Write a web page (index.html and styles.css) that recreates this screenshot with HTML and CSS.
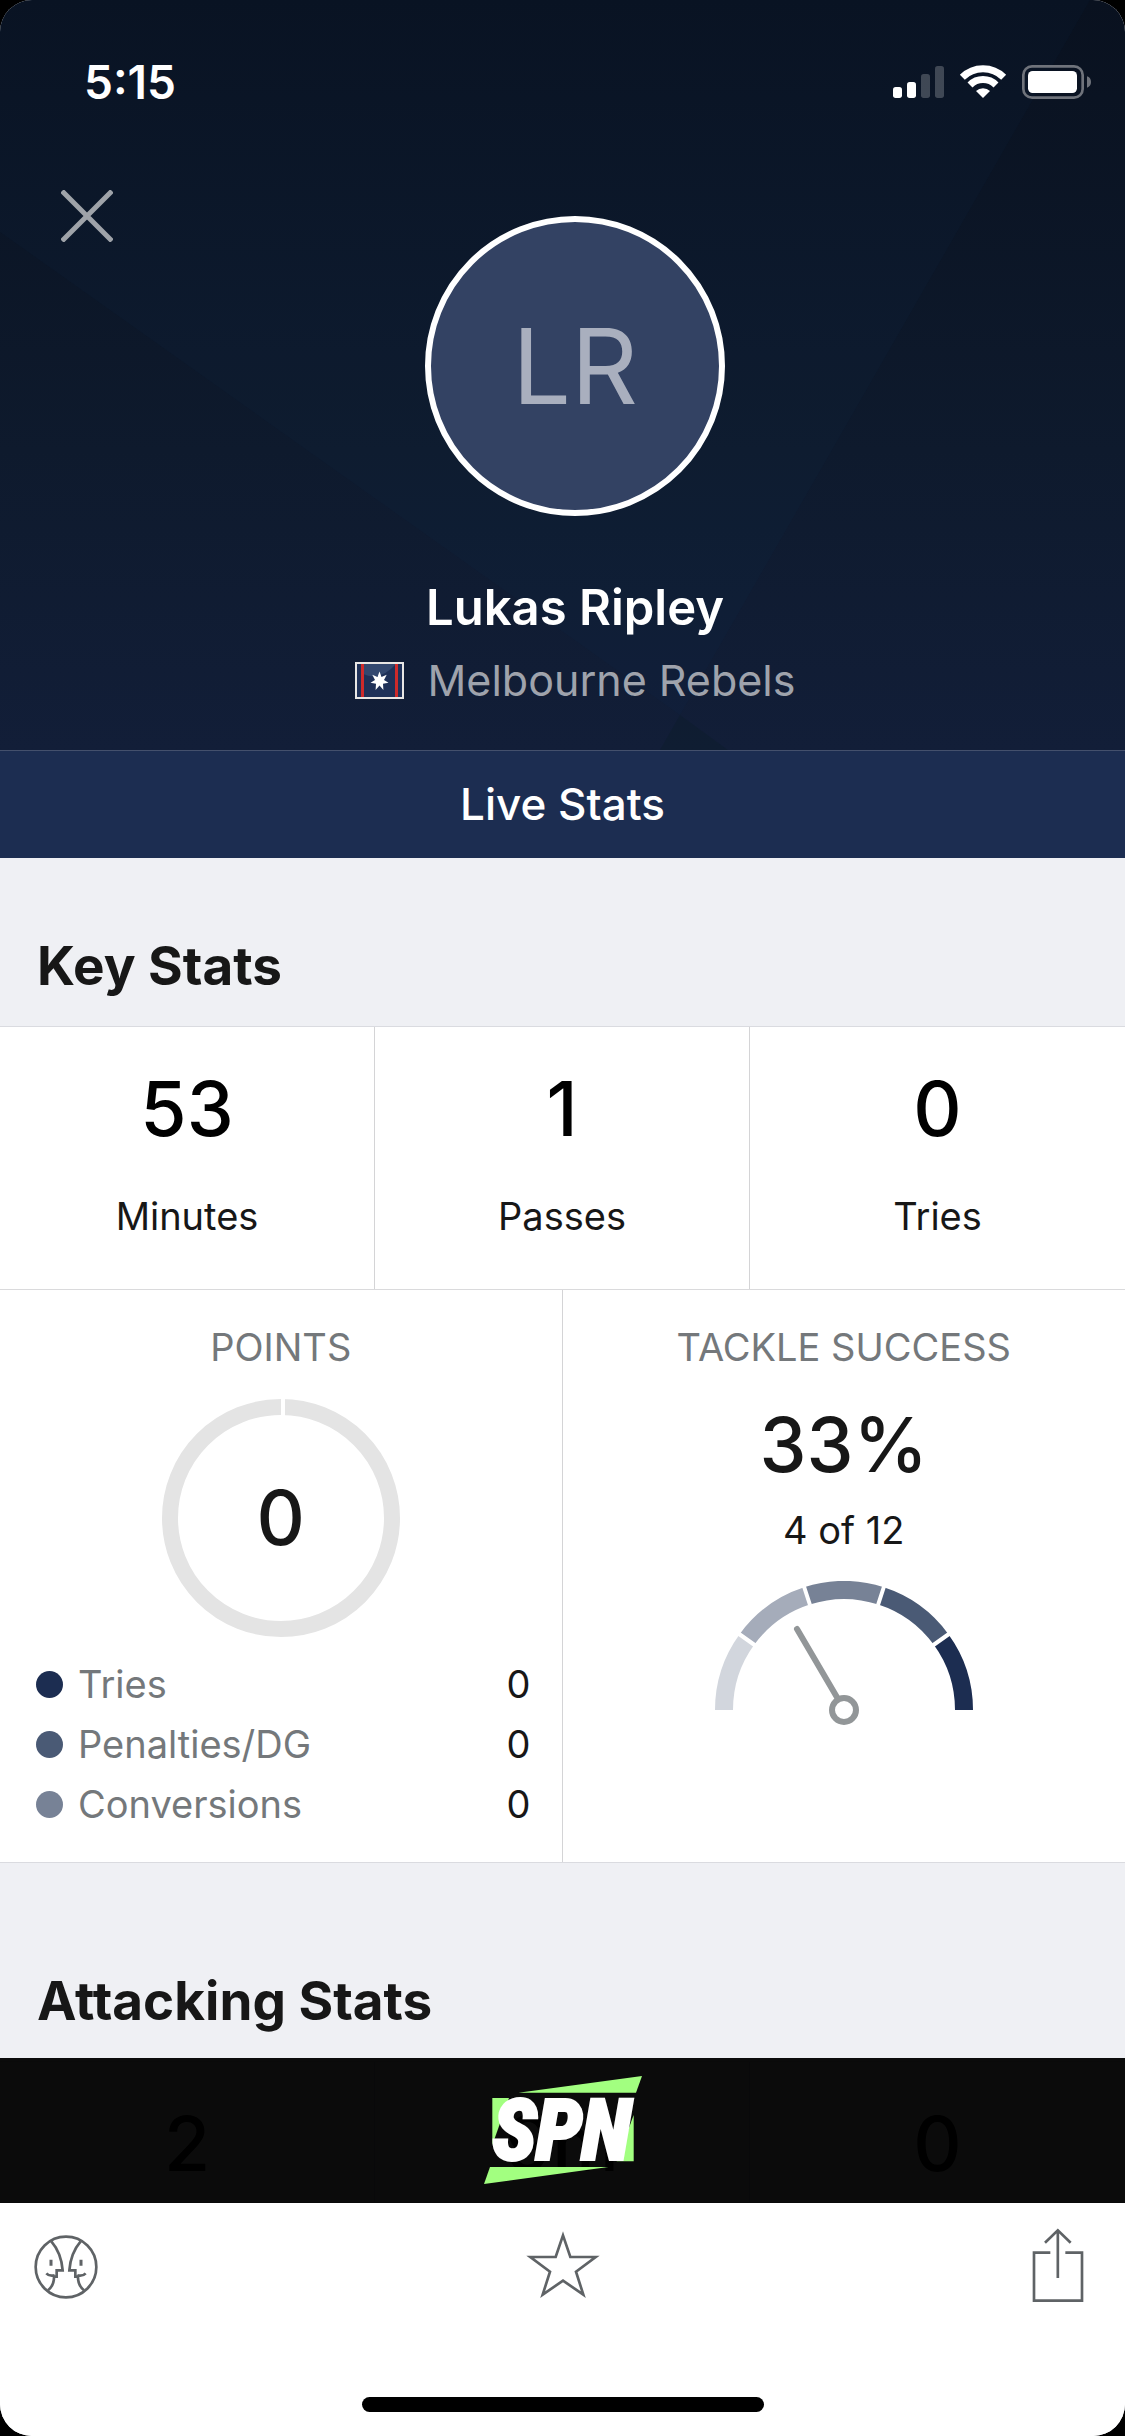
FILE: index.html
```
<!DOCTYPE html>
<html lang="en">
<head>
    <meta charset="UTF-8">
    <meta name="viewport" content="width=device-width, initial-scale=1.0">
    <title>Lukas Ripley - Live Stats</title>
    <link rel="stylesheet" href="styles.css">
</head>
<body>
    <div class="screen">

        <header class="header">
            <svg class="header-shapes" viewBox="0 0 1125 750" preserveAspectRatio="none" aria-hidden="true">
                <polygon points="0,0 1090,0 680,715 0,232" fill="#14326a" opacity="0.07"/>
                <polygon points="680,715 728,750 660,750" fill="#0c1c28" opacity="0.35"/>
            </svg>

            <div class="status-bar">
                <span class="time">5:15</span>
                <svg class="status-icons" viewBox="99 72 594 108" aria-label="Signal, Wi-Fi and battery">
                    <g fill="#fff">
                        <rect x="99" y="141" width="27" height="33" rx="8"/>
                        <rect x="141" y="126" width="27" height="48" rx="8"/>
                        <rect x="183" y="102" width="27" height="72" rx="8" opacity="0.22"/>
                        <rect x="225" y="78" width="27" height="96" rx="8" opacity="0.22"/>
                        <path d="M369 174L348 153A30 30 0 0 1 390 153Z"/>
                    </g>
                    <g fill="none" stroke="#fff" stroke-width="21">
                        <path d="M330 135A55 55 0 0 1 408 135"/>
                        <path d="M307 112A88 88 0 0 1 431 112"/>
                    </g>
                    <rect x="490" y="79" width="178" height="94" rx="26" fill="none" stroke="#6f737b" stroke-width="8"/>
                    <rect x="504" y="93" width="147" height="66" rx="14" fill="#fff"/>
                    <path d="M681 109q12 4 12 17t-12 17z" fill="#6f737b"/>
                </svg>
            </div>

            <div class="profile">
                <button class="close" aria-label="Close">
                    <svg viewBox="0 0 52 52"><path d="M1 1L51 51M51 1L1 51"/></svg>
                </button>
                <div class="avatar">LR</div>
            </div>
            <div class="player">
                <h1 class="player-name">Lukas Ripley</h1>
                <p class="team">
                    <svg class="flag" viewBox="0 0 49 37" aria-hidden="true">
                        <rect width="49" height="37" fill="#e8e6e4"/>
                        <rect x="2" y="2" width="45" height="33" fill="#1f3158"/>
                        <path d="M8 2h33q-16 18-33 10z" fill="#33486f"/>
                        <path d="M6 2h3v33h-3zM40 2h3v33h-3z" fill="#cf2a2a"/>
                        <path d="M24.500 9.500l2 5.500 5.200-2.200-2.700 5.200 4.500 2.700-5.500 1 .4 6.300-3.900-4.500-3.900 4.500.4-6.300-5.500-1 4.500-2.700-2.700-5.200 5.200 2.200z" fill="#fff"/>
                    </svg>
                    Melbourne Rebels
                </p>
            </div>
        </header>

        <nav class="tabs">
            <a href="#live" class="tab">Live Stats</a>
        </nav>

        <main class="content" id="live">
            <section>
                <h2 class="section-title">Key Stats</h2>
                <div class="stat-grid">
                    <div class="stat">
                        <p class="big-number">53</p>
                        <p class="stat-label">Minutes</p>
                    </div>
                    <div class="stat">
                        <p class="big-number">1</p>
                        <p class="stat-label">Passes</p>
                    </div>
                    <div class="stat">
                        <p class="big-number">0</p>
                        <p class="stat-label">Tries</p>
                    </div>
                </div>

                <div class="card-row">
                    <div class="card">
                        <h3 class="card-title">Points</h3>
                        <div class="donut">
                            <svg viewBox="0 0 238 238" aria-hidden="true">
                                <circle cx="119" cy="119" r="111" fill="none" stroke="#e4e4e4" stroke-width="16"/>
                                <path d="M121 0V18" stroke="#fff" stroke-width="4"/>
                            </svg>
                            <span class="big-number">0</span>
                        </div>
                        <ul class="legend">
                            <li><span class="dot dot-tries"></span>Tries<b>0</b></li>
                            <li><span class="dot dot-penalties"></span>Penalties/DG<b>0</b></li>
                            <li><span class="dot dot-conversions"></span>Conversions<b>0</b></li>
                        </ul>
                    </div>

                    <div class="card">
                        <h3 class="card-title">Tackle Success</h3>
                        <p class="big-number percent">33%</p>
                        <p class="tackles">4 of 12</p>
                        <svg class="gauge" viewBox="0 0 258 145" aria-hidden="true">
                            <!-- five bands of 36 degrees each -->
                            <g fill="none" stroke-width="18">
                                <path d="M9 129A120 120 0 0 1 31.900 58.500" stroke="#d2d6dd"/>
                                <path d="M31.900 58.500A120 120 0 0 1 91.900 14.900" stroke="#a5acba"/>
                                <path d="M91.900 14.900A120 120 0 0 1 166.100 14.900" stroke="#778296"/>
                                <path d="M166.100 14.900A120 120 0 0 1 226.100 58.500" stroke="#4a5a75"/>
                                <path d="M226.100 58.500A120 120 0 0 1 249 129" stroke="#1c2d51"/>
                            </g>
                            <g stroke="#fff" stroke-width="4">
                                <path d="M22 51.500L41 65M88.500 4L95 24M169.500 4L163 24M236 51.500L217 65"/>
                            </g>
                            <g fill="none" stroke="#929698" stroke-width="6">
                                <path d="M82 48L123 118" stroke-linecap="round"/>
                                <circle cx="129" cy="129" r="12"/>
                            </g>
                        </svg>
                    </div>
                </div>
            </section>

            <section class="attacking">
                <h2 class="section-title">Attacking Stats</h2>
                <div class="stat-grid">
                    <div class="stat">
                        <p class="big-number">2</p>
                    </div>
                    <div class="stat">
                        <p class="big-number">9m</p>
                    </div>
                    <div class="stat">
                        <p class="big-number">0</p>
                    </div>
                </div>
            </section>
        </main>

        <footer class="footer">
            <a href="#sponsor" class="banner" aria-label="Sponsor">
                <svg class="banner-logo" viewBox="72 48 474 324">
                    <g fill="#a2ff80">
                        <polygon points="175,98 546,48 528,98"/>
                        <polygon points="97,114 147,114 97,255"/>
                        <polygon points="521,165 521,304 470,304"/>
                        <polygon points="90,321 445,321 72,372"/>
                    </g>
                    <text class="logo-text" x="98" y="298">SPN</text>
                </svg>
            </a>

            <div class="toolbar">
                <button aria-label="Player comparison">
                    <svg viewBox="41 28 192 228">
                        <circle cx="137" cy="142" r="91"/>
                        <path d="M93 65Q123 100 127 152H109V171H101Q102 196 83 212"/>
                        <path d="M181 65Q151 100 147 152H165V171H173Q172 196 191 212"/>
                        <path d="M78 161Q87 171 103 167M196 161Q187 171 171 167"/>
                        <path d="M92 120V138M182 120V138" stroke-width="9"/>
                    </svg>
                </button>
                <button aria-label="Add to favourites">
                    <svg viewBox="62 28 192 228">
                        <path d="M158 47L180 112H256L197 156L219 225L158 183L97 225L119 156L60 112H136Z"/>
                    </svg>
                </button>
                <button aria-label="Share">
                    <svg viewBox="50 54 192 228">
                        <path d="M120 125H71V269H215V125H165M142.500 60V201M104 95L142.500 58L181 95"/>
                    </svg>
                </button>
            </div>
            <div class="home-indicator"></div>
        </footer>

    </div>
</body>
</html>
```

FILE: styles.css
```
* {
    margin: 0;
    padding: 0;
    box-sizing: border-box;
}

body {
    background: #000;
    color: #171717;
    font-family: Inter, -apple-system, 'Liberation Sans', sans-serif;
    font-size: 38px;
    line-height: 50px;
}

button {
    border: none;
    background: none;
    cursor: pointer;
}

a {
    color: inherit;
    text-decoration: none;
}

svg {
    display: block;
}

.screen {
    display: flex;
    flex-direction: column;
    height: 100vh;
    overflow: hidden;
    border-radius: 32px;
    background: #eff0f4;
}

/* Header */
.header {
    position: relative;
    flex: none;
    padding-bottom: 40px;
    background: linear-gradient(180deg, #09111f 0%, #0e1a2d 60%, #121e38 100%);
    color: #fff;
}

.header-shapes {
    position: absolute;
    inset: 0;
    width: 100%;
    height: 100%;
}

.status-bar {
    position: relative;
    display: flex;
    justify-content: space-between;
    align-items: center;
    padding: 64px 34px 90px 84px;
    line-height: 36px;
}

.time {
    font-size: 46px;
    font-weight: 600;
}

.status-icons {
    width: 198px;
    height: 36px;
}

.profile {
    position: relative;
    display: grid;
    grid-template-columns: 1fr auto 1fr;
    align-items: start;
    padding: 0 36px 0 61px;
}

.close {
    width: 52px;
    height: 52px;
}

.close svg {
    width: 52px;
    height: 52px;
    stroke: #9fa3a9;
    stroke-width: 5;
}

.avatar {
    width: 300px;
    height: 300px;
    margin-top: 26px;
    border: 6px solid #fff;
    border-radius: 50%;
    background: #334263;
    color: #a9afbe;
    font-size: 104px;
    line-height: 288px;
    text-align: center;
}

.player {
    position: relative;
    padding: 62px 0 0 25px;
    text-align: center;
    line-height: 60px;
}

.player-name {
    font-size: 49px;
    font-weight: 600;
}

.team {
    display: flex;
    justify-content: center;
    align-items: center;
    gap: 24px;
    margin-top: 12px;
    color: #9fa3ac;
    font-size: 43px;
}

.flag {
    width: 49px;
    height: 37px;
}

/* Tabs */
.tabs {
    flex: none;
    border-top: 1px solid #44506c;
    background: #1c2d51;
    color: #fff;
    text-align: center;
}

.tab {
    display: block;
    font-size: 44px;
    font-weight: 500;
    line-height: 107px;
}

/* Content */
.content {
    flex: 1;
    min-height: 0;
    overflow-y: auto;
    scrollbar-width: none;
}

.attacking {
    padding-top: 30px;
}

.section-title {
    padding: 78px 37px 30px;
    font-size: 53px;
    font-weight: 700;
    line-height: 60px;
}

.stat-grid {
    display: grid;
    grid-template-columns: repeat(3, 1fr);
    border-top: 1px solid #dadbe0;
    border-bottom: 1px solid #dadadc;
    background: #fff;
    text-align: center;
}

.stat {
    padding: 44px 0 48px;
}

.stat:not(:last-child),
.card:not(:last-child) {
    border-right: 1px solid #d4d4d6;
}

.big-number {
    font-size: 75px;
    font-weight: 500;
    line-height: 76px;
}

.stat .big-number {
    color: #000;
}

.stat-label {
    margin-top: 44px;
}

.card-row {
    display: grid;
    grid-template-columns: 1fr 1fr;
    border-bottom: 1px solid #dadbe0;
    background: #fff;
}

.card {
    padding: 32px 0 28px;
    text-align: center;
}

.card-title {
    color: #74787b;
    font-size: 38px;
    font-weight: 400;
    text-transform: uppercase;
}

.donut {
    display: grid;
    place-items: center;
    margin-top: 27px;
}

.donut > * {
    grid-area: 1 / 1;
}

.donut svg {
    width: 238px;
    height: 238px;
}

.legend {
    margin-top: 17px;
    padding: 0 31px 0 36px;
    list-style: none;
    color: #74787b;
    line-height: 60px;
}

.legend li {
    display: flex;
    align-items: center;
}

.legend b {
    margin-left: auto;
    color: #171717;
    font-weight: 400;
}

.dot {
    width: 27px;
    height: 27px;
    margin-right: 15px;
    border-radius: 50%;
}

.dot-tries {
    background: #1c2d51;
}

.dot-penalties {
    background: #4a5a75;
}

.dot-conversions {
    background: #778296;
}

.percent {
    margin-top: 35px;
}

.tackles {
    margin-top: 22px;
}

.gauge {
    width: 258px;
    height: 145px;
    margin: 26px auto 0;
}

/* Footer */
.footer {
    position: relative;
    flex: none;
    padding-bottom: 24px;
    border-top: 1px solid #cfd0d2;
    background: #fff;
}

/* sits over the end of the scrolling content */
.banner {
    position: absolute;
    right: 0;
    bottom: 100%;
    left: 0;
    display: flex;
    justify-content: center;
    height: 145px;
    padding-top: 18px;
    background: rgba(0, 0, 0, 0.956);
}

.banner-logo {
    width: 158px;
    height: 108px;
}

.logo-text {
    fill: #fff;
    stroke: #fff;
    stroke-width: 12px;
    font-family: 'Liberation Sans Narrow', 'Roboto Condensed', Roboto, sans-serif;
    font-size: 248px;
    font-style: italic;
    font-weight: 700;
}

.toolbar {
    display: flex;
    justify-content: space-between;
    padding: 26px 34px 0;
}

.toolbar svg {
    width: 64px;
    height: 76px;
    overflow: visible;
    fill: none;
    stroke: #5f6366;
    stroke-width: 8;
}

.home-indicator {
    width: 402px;
    height: 15px;
    margin: 92px auto 0;
    border-radius: 8px;
    background: #000;
}
```
